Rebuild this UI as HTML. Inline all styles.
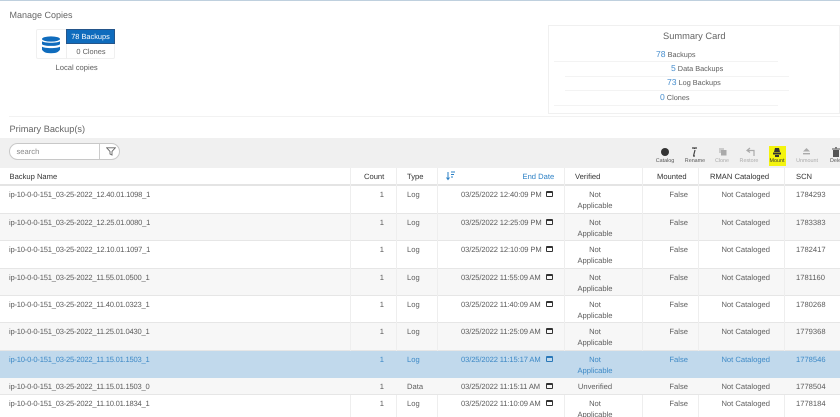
<!DOCTYPE html>
<html><head><meta charset="utf-8">
<style>
html,body{margin:0;padding:0;background:#fff}
#p{position:relative;width:840px;height:417px;overflow:hidden;background:#fff;font-family:"Liberation Sans","DejaVu Sans",sans-serif;font-size:7.6px;color:#5e5e5e;filter:blur(.35px);text-rendering:geometricPrecision}
.a{position:absolute;white-space:nowrap}
.r{position:absolute;left:0;width:840px;border-bottom:1px solid #e6e6e6;box-sizing:border-box}
.r span{position:absolute;top:3px;line-height:11px;white-space:nowrap}
.n{left:9px;letter-spacing:-.22px}
.c{left:370px;width:14px;text-align:right}
.t{left:407px}
.d{left:461px;letter-spacing:-.12px}
.r span.i{left:546px;top:5px;width:7px;height:6px;border:1px solid #333;border-top-width:2px;box-sizing:border-box;border-radius:1px}
.v{left:555px;width:80px;text-align:center}
.m{left:650px;width:38px;text-align:right}
.g{left:700px;width:70px;text-align:right}
.s{left:796px}
.o{background:#f7f7f7}
.sel{background:#c1d9ec;color:#3f8ac6}
.r.sel span.i{border-color:#2a78b8}
.sep{position:absolute;top:168px;width:1px;height:249px;background:#eeeeee}
.tb{position:absolute;top:158px;font-size:5.4px;text-align:center;width:30px;color:#555}
.dim{color:#aaa}
</style></head><body><div id="p">
<div class="a" style="left:0;top:0;width:840px;height:1px;background:#bfd0de"></div>
<div class="a" style="left:9.5px;top:9.5px;font-size:9px;color:#666">Manage Copies</div>

<div class="a" style="left:36px;top:29px;width:79px;height:30px;border:1px solid #f0f0f0;border-radius:2px;box-sizing:border-box"></div>
<div class="a" style="left:66px;top:29px;width:49px;height:15px;background:#0f6cbd;border:1px solid #24558a;box-sizing:border-box;color:#fff;text-align:center;line-height:13px;font-size:7.4px">78 Backups</div>
<div class="a" style="left:66px;top:44px;width:49px;height:15px;text-align:center;line-height:15px;font-size:7.4px;border-left:1px solid #eee;box-sizing:border-box">0 Clones</div>
<svg class="a" style="left:41px;top:36px" width="20" height="19" viewBox="0 0 20 19"><g fill="#0f6cbd"><ellipse cx="10" cy="3" rx="9" ry="2.6"/><path d="M1 5.2c2 2 16 2 18 0v3c-2 2.3-16 2.3-18 0zM1 10.6c2 2 16 2 18 0v3.2c-2 2.4-3 3.4-9 3.4s-7-1-9-3.4z"/></g></svg>
<div class="a" style="left:55.5px;top:63px;font-size:7.6px">Local copies</div>

<div class="a" style="left:548px;top:25px;width:292px;height:89px;border:1px solid #f0f0f0;box-sizing:border-box"></div>
<div class="a" style="left:663px;top:31px;font-size:9.3px;color:#666">Summary Card</div>
<div class="a" style="left:656px;top:48.5px;font-size:7.3px"><span style="color:#4a90cf;font-size:8.6px">78</span> Backups</div>
<div class="a" style="left:671px;top:62.5px;font-size:7.3px"><span style="color:#4a90cf;font-size:8.6px">5</span> Data Backups</div>
<div class="a" style="left:667px;top:77px;font-size:7.3px"><span style="color:#4a90cf;font-size:8.6px">73</span> Log Backups</div>
<div class="a" style="left:660px;top:92px;font-size:7.3px"><span style="color:#4a90cf;font-size:8.6px">0</span> Clones</div>
<div class="a" style="left:554px;top:61px;width:224px;height:1px;background:#f3f3f3"></div>
<div class="a" style="left:565px;top:76px;width:224px;height:1px;background:#f3f3f3"></div>
<div class="a" style="left:565px;top:90px;width:224px;height:1px;background:#f3f3f3"></div>
<div class="a" style="left:554px;top:105px;width:224px;height:1px;background:#f3f3f3"></div>

<div class="a" style="left:9px;top:116px;width:831px;height:1px;background:#f2f2f2"></div>
<div class="a" style="left:9.5px;top:124px;font-size:9.2px;color:#666">Primary Backup(s)</div>

<div class="a" style="left:0;top:138px;width:840px;height:30px;background:#f0f0f0"></div>
<div class="a" style="left:9px;top:143px;width:111px;height:17px;background:#fff;border:1px solid #c8c8c8;border-radius:9px;box-sizing:border-box"></div>
<div class="a" style="left:99px;top:144px;width:1px;height:15px;background:#ccc"></div>
<div class="a" style="left:16.5px;top:147px;color:#8a8a8a">search</div>
<svg class="a" style="left:106px;top:147px" width="10" height="9" viewBox="0 0 10 9"><path d="M.7.8h8.6L6 4.4v3.6L4 7V4.4z" fill="none" stroke="#666" stroke-width=".9"/></svg>

<div class="a" style="left:769px;top:146px;width:17px;height:20px;background:#f4f40e"></div>
<div class="a" style="left:661px;top:148px;width:8px;height:8px;border-radius:50%;background:#333"></div>
<svg class="a" style="left:690px;top:147px" width="9" height="10" viewBox="0 0 9 10"><path d="M2 1h5M4.5 1v1M5 3L3.5 9M3 9h2" stroke="#444" stroke-width="1.2" fill="none"/></svg>
<svg class="a" style="left:718px;top:147px" width="9" height="9" viewBox="0 0 9 9"><rect x="1" y="1" width="5" height="5" fill="#ccc"/><rect x="3" y="3" width="5.5" height="5.5" fill="#aaa"/></svg>
<svg class="a" style="left:746px;top:147px" width="9" height="9" viewBox="0 0 9 9"><path d="M4 1L1 3.5 4 5.5M1.5 3.5H8V9" stroke="#aaa" stroke-width="1.2" fill="none"/></svg>
<svg class="a" style="left:772px;top:147px" width="10" height="10" viewBox="0 0 10 10"><path d="M3 1h4l1 4H2z M1 5.5h8v2H1z M3 8h4v2H3z" fill="#333"/></svg>
<svg class="a" style="left:802px;top:147px" width="9" height="9" viewBox="0 0 9 9"><path d="M4.5 1L8 4.5H1z" fill="#aaa"/><rect x="1" y="6" width="7" height="1.4" fill="#aaa"/></svg>
<svg class="a" style="left:832px;top:147px" width="8" height="10" viewBox="0 0 8 10"><path d="M1 3h6v7H1zM0 1.5h8v1H0zM3 .3h2v1H3z" fill="#555"/></svg>
<div class="tb" style="left:650px">Catalog</div>
<div class="tb" style="left:680px">Rename</div>
<div class="tb dim" style="left:707px">Clone</div>
<div class="tb dim" style="left:734px">Restore</div>
<div class="tb" style="left:762px;color:#333">Mount</div>
<div class="tb dim" style="left:792px">Unmount</div>
<div class="tb" style="left:830px;width:auto">Delete</div>

<div class="r" style="top:168px;height:18px;border-bottom:2px solid #e4e4e4;color:#333">
<span style="left:9.5px">Backup Name</span>
<span style="left:364px">Count</span>
<span style="left:407px">Type</span>
<span style="left:522.5px;color:#2a7fc4">End Date</span>
<span style="left:575px">Verified</span>
<span style="left:657px">Mounted</span>
<span style="left:710px">RMAN Cataloged</span>
<span style="left:796px">SCN</span>
</div>
<svg class="a" style="left:446px;top:171px" width="9" height="10" viewBox="0 0 9 10"><path d="M2 1v7M.5 6.5L2 8.5 3.5 6.5" stroke="#2a7fc4" fill="none"/><path d="M5 1h4M5 3.5h3M5 6h2" stroke="#2a7fc4"/></svg>

<div class="r" style="top:186px;height:28px"><span class="n">ip-10-0-0-151_03-25-2022_12.40.01.1098_1</span><span class="c">1</span><span class="t">Log</span><span class="d">03/25/2022 12:40:09 PM</span><span class="i"></span><span class="v">Not<br>Applicable</span><span class="m">False</span><span class="g">Not Cataloged</span><span class="s">1784293</span></div>
<div class="r o" style="top:214px;height:27px"><span class="n">ip-10-0-0-151_03-25-2022_12.25.01.0080_1</span><span class="c">1</span><span class="t">Log</span><span class="d">03/25/2022 12:25:09 PM</span><span class="i"></span><span class="v">Not<br>Applicable</span><span class="m">False</span><span class="g">Not Cataloged</span><span class="s">1783383</span></div>
<div class="r" style="top:241px;height:28px"><span class="n">ip-10-0-0-151_03-25-2022_12.10.01.1097_1</span><span class="c">1</span><span class="t">Log</span><span class="d">03/25/2022 12:10:09 PM</span><span class="i"></span><span class="v">Not<br>Applicable</span><span class="m">False</span><span class="g">Not Cataloged</span><span class="s">1782417</span></div>
<div class="r o" style="top:269px;height:27px"><span class="n">ip-10-0-0-151_03-25-2022_11.55.01.0500_1</span><span class="c">1</span><span class="t">Log</span><span class="d">03/25/2022 11:55:09 AM</span><span class="i"></span><span class="v">Not<br>Applicable</span><span class="m">False</span><span class="g">Not Cataloged</span><span class="s">1781160</span></div>
<div class="r" style="top:296px;height:27px"><span class="n">ip-10-0-0-151_03-25-2022_11.40.01.0323_1</span><span class="c">1</span><span class="t">Log</span><span class="d">03/25/2022 11:40:09 AM</span><span class="i"></span><span class="v">Not<br>Applicable</span><span class="m">False</span><span class="g">Not Cataloged</span><span class="s">1780268</span></div>
<div class="r o" style="top:323px;height:28px"><span class="n">ip-10-0-0-151_03-25-2022_11.25.01.0430_1</span><span class="c">1</span><span class="t">Log</span><span class="d">03/25/2022 11:25:09 AM</span><span class="i"></span><span class="v">Not<br>Applicable</span><span class="m">False</span><span class="g">Not Cataloged</span><span class="s">1779368</span></div>
<div class="sep" style="left:350px"></div><div class="sep" style="left:396px"></div><div class="sep" style="left:437px"></div><div class="sep" style="left:564px"></div><div class="sep" style="left:642px"></div><div class="sep" style="left:698px"></div><div class="sep" style="left:784px"></div>
<div class="r sel" style="top:351px;height:27px;border-bottom:0"><span class="n">ip-10-0-0-151_03-25-2022_11.15.01.1503_1</span><span class="c">1</span><span class="t">Log</span><span class="d">03/25/2022 11:15:17 AM</span><span class="i"></span><span class="v">Not<br>Applicable</span><span class="m">False</span><span class="g">Not Cataloged</span><span class="s">1778546</span></div>
<div class="r o" style="top:378px;height:17px"><span class="n">ip-10-0-0-151_03-25-2022_11.15.01.1503_0</span><span class="c">1</span><span class="t">Data</span><span class="d">03/25/2022 11:15:11 AM</span><span class="i"></span><span class="v">Unverified</span><span class="m">False</span><span class="g">Not Cataloged</span><span class="s">1778504</span></div>
<div class="r" style="top:395px;height:22px;border-bottom:0;background:transparent"><span class="n">ip-10-0-0-151_03-25-2022_11.10.01.1834_1</span><span class="c">1</span><span class="t">Log</span><span class="d">03/25/2022 11:10:09 AM</span><span class="i"></span><span class="v">Not<br>Applicable</span><span class="m">False</span><span class="g">Not Cataloged</span><span class="s">1778184</span></div>
</div></body></html>
